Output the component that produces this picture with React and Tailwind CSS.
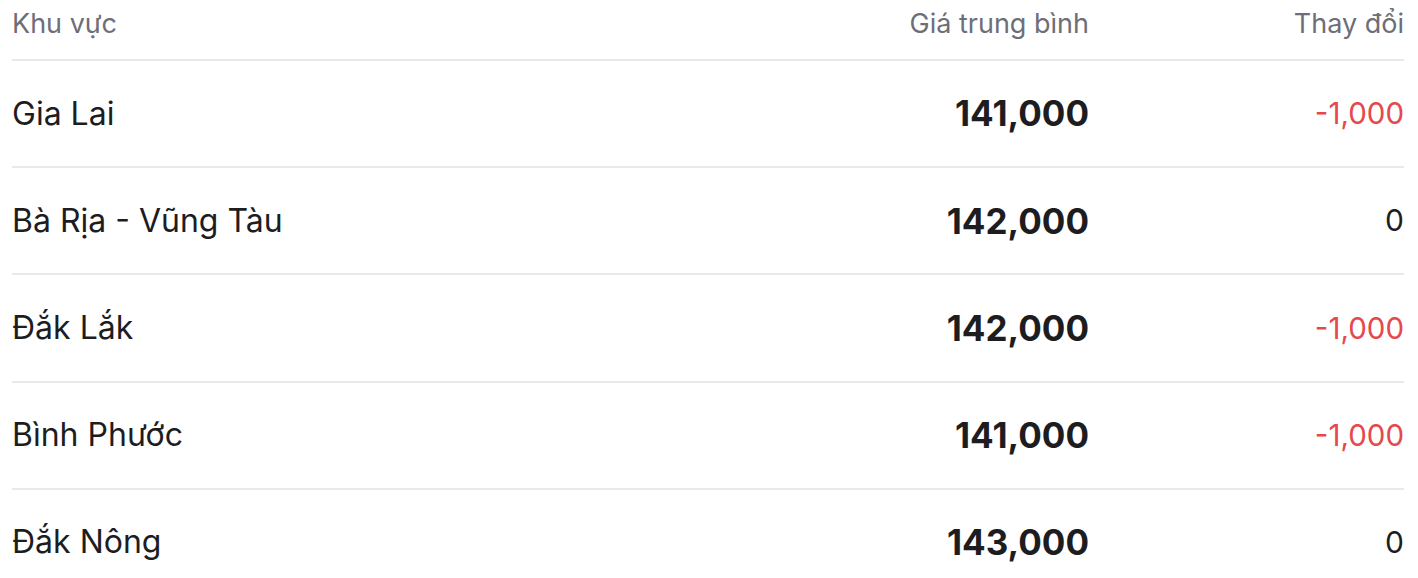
const rows = [
  { name: 'Gia Lai', price: '141,000', change: '-1,000' },
  { name: 'Bà Rịa - Vũng Tàu', price: '142,000', change: '0' },
  { name: 'Đắk Lắk', price: '142,000', change: '-1,000' },
  { name: 'Bình Phước', price: '141,000', change: '-1,000' },
  { name: 'Đắk Nông', price: '143,000', change: '0' },
];

export default function App() {
  return (
    <div className="min-h-screen bg-white pl-[12px] pr-[14px] font-['Inter',sans-serif]">
      <div className="flex items-start h-[61px] pt-[4px] border-b-2 border-[#e8e8ed] text-[27px] text-[#6e6e78]">
        <div className="flex-1">Khu vực</div>
        <div className="w-[400px] text-right">Giá trung bình</div>
        <div className="w-[315px] text-right">Thay đổi</div>
      </div>
      {rows.map((r, i) => (
        <div
          key={i}
          className="flex items-center h-[107.2px] border-b-2 border-[#e8e8ed]"
        >
          <div className="flex-1 text-[32px] text-[#1d1d1f]">{r.name}</div>
          <div className="w-[400px] text-right text-[35px] font-bold text-[#1d1d1f]">{r.price}</div>
          <div
            className={
              r.change === '0'
                ? 'w-[315px] text-right text-[30px] text-[#1d1d1f]'
                : 'w-[315px] text-right text-[29.5px] text-[#e5484d]'
            }
          >
            {r.change}
          </div>
        </div>
      ))}
    </div>
  );
}
